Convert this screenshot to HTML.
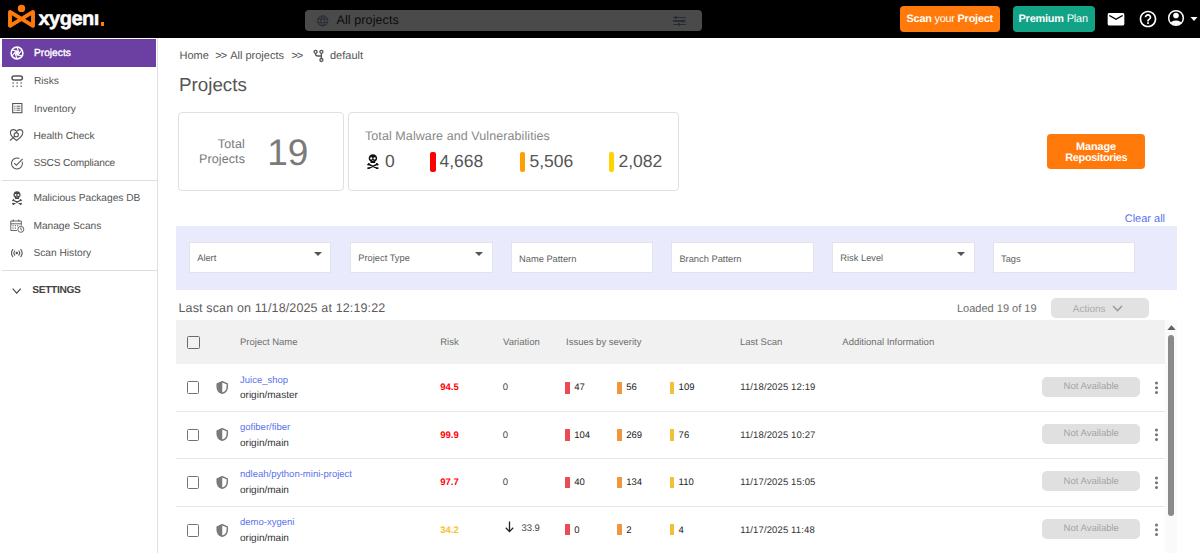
<!DOCTYPE html>
<html>
<head>
<meta charset="utf-8">
<title>Xygeni - Projects</title>
<style>
*{box-sizing:border-box;margin:0;padding:0}
html,body{width:1200px;height:553px;overflow:hidden;background:#fff;font-family:"Liberation Sans",sans-serif;color:#555;text-rendering:geometricPrecision}
.abs{position:absolute}
.t{position:absolute;white-space:nowrap;line-height:1;transform-origin:0 0}
#hdr{position:absolute;left:0;top:0;width:1200px;height:38px;background:#000}
#side{position:absolute;left:0;top:38px;width:158px;height:515px;background:#fff;border-right:1px solid #e0e0e0}
.mi{position:absolute;left:2px;width:154.400px;height:27.600px}
.mi.sel{background:#6c3fa3}
.mi .lbl{position:absolute;left:32px;top:9.400px;font-size:10.2px;color:#555;line-height:1;white-space:nowrap}
.mi.sel .lbl{color:#fff;-webkit-text-stroke:0.35px #fff}
.card{position:absolute;border:1px solid #e0e0e0;border-radius:4px;background:#fff}
.btn{position:absolute;border-radius:4px;color:#fff;text-align:center}
#band{position:absolute;left:175.600px;top:226px;width:1001.200px;height:64px;background:#e9eafc}
.inp{position:absolute;top:242.300px;width:142.300px;height:31px;background:#fff;border:1px solid #e3e3ea}
.inp span{position:absolute;left:7px;top:10px;font-size:9.300px;color:#606060;line-height:1;white-space:nowrap}
.caret{position:absolute;width:0;height:0;border-left:4px solid transparent;border-right:4px solid transparent;border-top:4px solid #555}
#thead{position:absolute;left:175.600px;top:320px;width:989.400px;height:44px;background:#f1f1f1}
.th{position:absolute;top:338.100px;font-size:9.500px;color:#6e6e6e;line-height:1;white-space:nowrap}
.row{position:absolute;left:176px;width:989px;height:47px;border-bottom:1px solid #e4e4e4}
.cb{position:absolute;width:12.400px;height:12.600px;border:1.600px solid #737373;border-radius:1.500px;background:#fff}
.na{position:absolute;left:1042px;width:98px;height:20px;border-radius:5px;background:#e0e0e0;color:#aaa;font-size:10px;text-align:center;line-height:19px}
.sev{position:absolute;width:4px;height:12px;border-radius:0.500px}
.c{position:absolute;font-size:9.500px;color:#222;line-height:1;white-space:nowrap}
</style>
</head>
<body>
<div id="hdr">
<svg class="abs" style="left:0;top:0" width="110" height="38" viewBox="0 0 110 38">
<g fill="none" stroke="#ff7a0a" stroke-width="3.900" stroke-linejoin="round" stroke-linecap="round">
<path d="M10 11.900L33 25.800L33 11.900L10 25.800Z"/>
</g>
<circle cx="21.5" cy="8.4" r="5.3" fill="#000"/>
<circle cx="21.5" cy="8.4" r="3.7" fill="#ff7a0a"/>
</svg>
<div class="t" id="logotxt" style="left:38.500px;top:9px;font-size:20px;font-weight:bold;color:#fff;letter-spacing:-0.500px;-webkit-text-stroke:0.5px #fff">xygen&#305;</div>
<div class="abs" style="left:101px;top:22px;width:3px;height:3.5px;background:#ff7a0a"></div>
<div class="abs" style="left:305px;top:10px;width:397px;height:21px;border-radius:4px;background:#4a4a4a"></div>
<svg class="abs" style="left:316.400px;top:14.200px" width="13.500" height="13.500" viewBox="0 0 24 24"><path fill="#2b2f36" d="M11.99 2C6.47 2 2 6.48 2 12s4.47 10 9.99 10C17.52 22 22 17.52 22 12S17.52 2 11.99 2zm6.93 6h-2.95c-.32-1.25-.78-2.45-1.38-3.56 1.84.63 3.37 1.91 4.33 3.56zM12 4.04c.83 1.2 1.48 2.53 1.91 3.96h-3.82c.43-1.43 1.08-2.76 1.91-3.96zM4.26 14C4.1 13.36 4 12.69 4 12s.1-1.36.26-2h3.38c-.08.66-.14 1.32-.14 2 0 .68.06 1.34.14 2H4.26zm.82 2h2.95c.32 1.25.78 2.45 1.38 3.56-1.84-.63-3.37-1.9-4.33-3.56zm2.95-8H5.08c.96-1.66 2.49-2.93 4.33-3.56C8.81 5.55 8.35 6.75 8.03 8zM12 19.96c-.83-1.2-1.48-2.53-1.91-3.96h3.82c-.43 1.43-1.08 2.76-1.91 3.96zM14.34 14H9.66c-.09-.66-.16-1.32-.16-2 0-.68.07-1.35.16-2h4.68c.09.65.16 1.32.16 2 0 .68-.07 1.34-.16 2zm.25 5.56c.6-1.11 1.06-2.31 1.38-3.56h2.95c-.96 1.65-2.49 2.93-4.33 3.56zM16.360 14c.08-.66.14-1.32.14-2 0-.68-.06-1.34-.14-2h3.38c.16.64.26 1.31.26 2s-.1 1.36-.26 2h-3.38z"/></svg>
<div class="t" id="allproj" style="left:336.500px;top:14.400px;font-size:12.500px;color:#0c0c0c;letter-spacing:0.100px">All projects</div>
<svg class="abs" style="left:672px;top:14px" width="15" height="14" viewBox="0 0 15 14"><g stroke="#262b31" stroke-width="1.2" fill="none"><path d="M1 3.5H14M1 7H14M1 10.5H14"/></g><g fill="#262b31"><rect x="3" y="2.3" width="2" height="2.4"/><rect x="10" y="5.6" width="2.4" height="2.8"/><rect x="6" y="9.3" width="2" height="2.4"/><rect x="1" y="6.2" width="10" height="1.6"/></g></svg>
<div class="btn" style="left:900px;top:6px;width:100px;height:26px;background:#ff7a0a"><div class="t" id="scanbtn" style="left:6.500px;top:8.100px;font-size:10.900px;color:#fff;letter-spacing:-0.220px"><b>Scan</b> your <b>Project</b></div></div>
<div class="btn" style="left:1012.500px;top:6px;width:82px;height:26px;background:#12a386"><div class="t" id="prembtn" style="left:6px;top:8.100px;font-size:10.900px;color:#fff;letter-spacing:-0.180px"><b>Premium</b> Plan</div></div>
<svg class="abs" style="left:1106.400px;top:9.600px" width="20" height="18.600" viewBox="0 0 24 24" preserveAspectRatio="none"><path fill="#fff" d="M20 4H4c-1.100 0-1.990.9-1.990 2L2 18c0 1.100.9 2 2 2h16c1.100 0 2-.9 2-2V6c0-1.100-.9-2-2-2zm0 4l-8 5-8-5V6l8 5 8-5v2z"/></svg>
<svg class="abs" style="left:1137.5px;top:8.8px" width="20" height="20" viewBox="0 0 24 24"><path fill="#fff" d="M11 18h2v-2h-2v2zm1-16C6.480 2 2 6.480 2 12s4.480 10 10 10 10-4.480 10-10S17.520 2 12 2zm0 18c-4.410 0-8-3.590-8-8s3.590-8 8-8 8 3.590 8 8-3.590 8-8 8zm0-14c-2.210 0-4 1.790-4 4h2c0-1.100.9-2 2-2s2 .9 2 2c0 2-3 1.750-3 5h2c0-2.250 3-2.500 3-5 0-2.210-1.790-4-4-4z"/></svg>
<svg class="abs" style="left:1166.200px;top:8.200px" width="20" height="20" viewBox="0 0 24 24"><defs><clipPath id="acc"><circle cx="12" cy="12" r="8.6"/></clipPath></defs><circle cx="12" cy="12" r="8.8" fill="none" stroke="#fff" stroke-width="1.8"/><circle cx="12" cy="9" r="3.4" fill="#fff"/><ellipse cx="12" cy="20.5" rx="7.5" ry="5.5" fill="#fff" clip-path="url(#acc)"/></svg>
<svg class="abs" style="left:1190px;top:17px" width="8" height="4" viewBox="0 0 8 4"><path d="M0.500 0H7.500L4 4Z" fill="#fff"/></svg>
</div>
<div id="side">
<div class="mi sel" style="top:1px"><span class="lbl" id="m1" style="left:32px;top:10.400px">Projects</span>
<svg class="abs" style="left:7.800px;top:6.600px" width="14" height="14" viewBox="0 0 14 14"><circle cx="7" cy="7" r="5.900" fill="none" stroke="#fff" stroke-width="1.600"/><g stroke="#fff" stroke-width="1.100" fill="none"><path d="M7.00 1.40L9.32 7.62M11.85 4.20L7.62 9.32M11.85 9.80L5.30 8.70M7.00 12.60L4.68 6.38M2.15 9.80L6.38 4.68M2.15 4.20L8.70 5.30"/></g><circle cx="7" cy="7" r="1.700" fill="#fff"/></svg></div>
<div class="mi" style="top:28.6px"><span class="lbl" id="m2" style="left:32px;top:10.400px">Risks</span>
<svg class="abs" style="left:9px;top:8px" width="13" height="13" viewBox="0 0 13 13"><rect x="1" y="0.900" width="10.400" height="4" rx="2" fill="none" stroke="#555" stroke-width="1.500"/><g fill="#555"><rect x="1.500" y="7.300" width="1.300" height="1.300"/><rect x="5.500" y="7.300" width="1.300" height="1.300"/><rect x="9.500" y="7.300" width="1.300" height="1.300"/><rect x="1.500" y="10.600" width="1.300" height="1.300"/><rect x="5.500" y="10.600" width="1.300" height="1.300"/><rect x="9.500" y="10.600" width="1.300" height="1.300"/></g></svg></div>
<div class="mi" style="top:56.200px"><span class="lbl" id="m3" style="left:32px;top:10.400px">Inventory</span>
<svg class="abs" style="left:9.500px;top:8.800px" width="11" height="11" viewBox="0 0 11 11"><rect x="0.700" y="0.500" width="9.200" height="9.200" fill="none" stroke="#555" stroke-width="1.100"/><g stroke="#555" stroke-width="0.900"><path d="M2.300 3.200H3.500M4.500 3.200H8.300M2.300 5.200H3.500M4.500 5.200H8.300M2.300 7.200H3.500M4.500 7.200H8.300"/></g></svg></div>
<div class="mi" style="top:83.800px"><span class="lbl" id="m4" style="left:31.400px;top:10.400px">Health Check</span>
<svg class="abs" style="left:7.300px;top:7.600px" width="15" height="13" viewBox="0 0 15 13"><path d="M7.600 2.400C8.400 1 9.700 0.600 10.800 0.600C12.600 0.600 13.800 1.900 13.800 3.600C13.800 6.600 10.300 9.700 7.600 11.500C4.900 9.700 1.400 6.600 1.400 3.600C1.400 1.900 2.600 0.600 4.400 0.600C5.500 0.600 6.800 1 7.600 2.400Z" fill="none" stroke="#555" stroke-width="1.050"/><circle cx="7.300" cy="5.700" r="2.100" fill="none" stroke="#555" stroke-width="1.050"/><path d="M5.800 7.200L0.900 11.600" stroke="#555" stroke-width="1.150" fill="none"/></svg></div>
<div class="mi" style="top:111.400px"><span class="lbl" id="m5" style="left:31.400px;letter-spacing:-0.180px">SSCS Compliance</span>
<svg class="abs" style="left:8px;top:7px" width="14" height="14" viewBox="0 0 14 14"><path d="M12.200 5.700A5.500 5.500 0 1 1 9.400 2.500" fill="none" stroke="#555" stroke-width="1.050"/><path d="M4.200 7.100L6.400 9.300L12.600 2.800" fill="none" stroke="#555" stroke-width="1.150"/></svg></div>
<div class="abs" style="left:2px;top:142px;width:155px;height:1px;background:#ddd"></div>
<div class="mi" style="top:146px"><span class="lbl" id="m6" style="left:31.400px;top:10.400px">Malicious Packages DB</span>
<svg class="abs" style="left:10px;top:6.800px" width="10" height="13.800" viewBox="0 0 12 15.500" preserveAspectRatio="none"><path d="M6 0.200C3.400 0.200 1.700 2 1.700 4.300C1.700 5.800 2.400 6.900 3.600 7.500V9.100H8.400V7.500C9.600 6.900 10.300 5.800 10.300 4.300C10.300 2 8.600 0.200 6 0.200Z" fill="#4a4a4a"/><circle cx="4.300" cy="4.500" r="1.150" fill="#fff"/><circle cx="7.700" cy="4.500" r="1.150" fill="#fff"/><path d="M6 5.700L5.300 7H6.700Z" fill="#fff"/><path d="M1.500 10.400L10.500 14.500M10.500 10.400L1.500 14.500" stroke="#4a4a4a" stroke-width="1.500" stroke-linecap="round"/><g fill="#4a4a4a"><circle cx="1.100" cy="10.700" r="0.900"/><circle cx="1.900" cy="10" r="0.900"/><circle cx="10.900" cy="10.700" r="0.900"/><circle cx="10.100" cy="10" r="0.900"/><circle cx="1.100" cy="14.200" r="0.900"/><circle cx="1.900" cy="14.900" r="0.900"/><circle cx="10.900" cy="14.200" r="0.900"/><circle cx="10.100" cy="14.900" r="0.900"/></g></svg></div>
<div class="mi" style="top:173.600px"><span class="lbl" id="m7" style="left:31.400px;top:10.400px">Manage Scans</span>
<svg class="abs" style="left:7.500px;top:7px" width="15" height="14" viewBox="0 0 15 14"><g fill="none" stroke="#555" stroke-width="0.900"><path d="M7 11.500H0.800V2H11.300V6.500M0.800 4.800H11.300M3.300 0.500V2.800M8.800 0.500V2.800"/><circle cx="10.800" cy="10.300" r="3"/><path d="M10.800 8.600V10.400L12 11.200"/></g><g fill="#555"><rect x="2.500" y="6.200" width="1.100" height="1.100"/><rect x="4.800" y="6.200" width="1.100" height="1.100"/><rect x="7.100" y="6.200" width="1.100" height="1.100"/><rect x="2.500" y="8.600" width="1.100" height="1.100"/><rect x="4.800" y="8.600" width="1.100" height="1.100"/></g></svg></div>
<div class="mi" style="top:201.800px"><span class="lbl" id="m8" style="left:31.400px">Scan History</span>
<svg class="abs" style="left:9.200px;top:9.600px" width="11.600" height="8.200" viewBox="0 0 13 9" preserveAspectRatio="none"><g fill="none" stroke="#555" stroke-width="1.250" stroke-linecap="round"><path d="M2 0.600C0.300 2.800 0.300 6.200 2 8.400M11 0.600C12.700 2.800 12.700 6.200 11 8.400M4.200 2.200C3.100 3.500 3.100 5.500 4.200 6.800M8.800 2.200C9.900 3.500 9.900 5.500 8.800 6.800"/></g><circle cx="6.500" cy="4.500" r="1.350" fill="#555"/></svg></div>
<div class="abs" style="left:2px;top:232px;width:155px;height:1px;background:#ddd"></div>
<svg class="abs" style="left:11.800px;top:250.200px" width="9.400" height="6.200" viewBox="0 0 11 7" preserveAspectRatio="none"><path d="M0.800 0.800L5.500 5.800L10.200 0.800" fill="none" stroke="#444" stroke-width="1.300"/></svg>
<div class="t" id="m9" style="left:32.300px;top:247.500px;font-size:10.200px;font-weight:bold;color:#444;letter-spacing:-0.350px">SETTINGS</div>
</div>
<div id="main">
<div class="t" id="b1" style="left:179.5px;top:51.400px;font-size:11px;color:#555">Home</div>
<div class="t" id="b2" style="left:215.3px;top:51.400px;font-size:11px;color:#555;letter-spacing:-1px">&gt;&gt;</div>
<div class="t" id="b3" style="left:230.2px;top:51.400px;font-size:11px;color:#555">All projects</div>
<div class="t" id="b4" style="left:291.4px;top:51.400px;font-size:11px;color:#555;letter-spacing:-1px">&gt;&gt;</div>
<svg class="abs" style="left:313px;top:49px" width="12" height="14" viewBox="0 0 12 14"><g fill="none" stroke="#555" stroke-width="1.300"><circle cx="2.6" cy="2.8" r="1.5"/><circle cx="8.400" cy="2.800" r="1.500"/><circle cx="8.400" cy="11" r="1.500"/><path d="M8.400 4.300V9.500M2.600 4.300V5.200C2.600 6.600 3.600 7 5 7H8.400"/></g></svg>
<div class="t" id="b5" style="left:330px;top:51.400px;font-size:11px;color:#555">default</div>
<div class="t" id="title" style="left:179px;top:75.900px;font-size:18.800px;color:#555">Projects</div>
<div class="card" style="left:178px;top:111.500px;width:166px;height:79.500px"></div>
<div class="t" id="c1a" style="right:955px;top:138.200px;font-size:12.500px;color:#777;letter-spacing:0.150px">Total</div>
<div class="t" id="c1b" style="right:955px;top:152.900px;font-size:12.500px;color:#777;letter-spacing:0.100px">Projects</div>
<div class="t" id="c1n" style="left:267.200px;top:133.700px;font-size:37px;color:#7a7a7a;letter-spacing:0px">19</div>
<div class="card" style="left:348px;top:111.500px;width:331px;height:79.500px"></div>
<div class="t" id="c2t" style="left:365px;top:130.300px;font-size:12.500px;color:#888;letter-spacing:0.080px">Total Malware and Vulnerabilities</div>
<svg class="abs" style="left:366.800px;top:154px" width="11.800" height="15.300" viewBox="0 0 12 15.500" preserveAspectRatio="none"><path d="M6 0.200C3.400 0.200 1.700 2 1.700 4.300C1.700 5.800 2.400 6.900 3.600 7.500V9.100H8.400V7.500C9.600 6.900 10.300 5.800 10.300 4.300C10.300 2 8.600 0.200 6 0.200Z" fill="#111"/><circle cx="4.300" cy="4.500" r="1.150" fill="#fff"/><circle cx="7.700" cy="4.500" r="1.150" fill="#fff"/><path d="M6 5.700L5.300 7H6.700Z" fill="#fff"/><path d="M1.500 10.400L10.500 14.500M10.500 10.400L1.500 14.500" stroke="#111" stroke-width="1.500" stroke-linecap="round"/><g fill="#111"><circle cx="1.100" cy="10.700" r="0.900"/><circle cx="1.900" cy="10" r="0.900"/><circle cx="10.900" cy="10.700" r="0.900"/><circle cx="10.100" cy="10" r="0.900"/><circle cx="1.100" cy="14.200" r="0.900"/><circle cx="1.900" cy="14.900" r="0.900"/><circle cx="10.900" cy="14.200" r="0.900"/><circle cx="10.100" cy="14.900" r="0.900"/></g></svg>
<div class="t" id="n0" style="left:385px;top:152.500px;font-size:17.500px;color:#555">0</div>
<div class="abs" style="left:430.300px;top:151.700px;width:5.500px;height:20px;border-radius:2px;background:#f00"></div>
<div class="t" id="n1" style="left:439.500px;top:152.500px;font-size:17.500px;color:#555">4,668</div>
<div class="abs" style="left:519.700px;top:151.700px;width:5.500px;height:20px;border-radius:2px;background:#ffa000"></div>
<div class="t" id="n2" style="left:529.500px;top:152.500px;font-size:17.500px;color:#555">5,506</div>
<div class="abs" style="left:608.900px;top:151.700px;width:5.500px;height:20px;border-radius:2px;background:#ffd200"></div>
<div class="t" id="n3" style="left:618.500px;top:152.500px;font-size:17.500px;color:#555">2,082</div>
<div class="btn" style="left:1047px;top:134px;width:98px;height:35px;background:#ff7a0a"></div>
<div class="t" id="mr1" style="left:1076px;top:141.600px;font-size:10.900px;font-weight:bold;color:#fff;letter-spacing:-0.080px">Manage</div>
<div class="t" id="mr2" style="left:1065.300px;top:153.100px;font-size:10.900px;font-weight:bold;color:#fff;letter-spacing:-0.330px">Repositories</div>
<div class="t" id="clr" style="left:1124.700px;top:213.800px;font-size:11px;color:#5b72ee">Clear all</div>
<div id="band"></div>
<div class="inp" style="left:189.200px"><span id="f0" style="top:10.700px">Alert</span><div class="caret" style="left:124px;top:9px"></div></div>
<div class="inp" style="left:350.300px"><span id="f1" style="top:10.700px">Project Type</span><div class="caret" style="left:124px;top:9px"></div></div>
<div class="inp" style="left:511px"><span id="f2" style="top:11.700px">Name Pattern</span></div>
<div class="inp" style="left:671.400px"><span id="f3" style="top:11.700px">Branch Pattern</span></div>
<div class="inp" style="left:832.300px"><span id="f4" style="top:10.700px">Risk Level</span><div class="caret" style="left:124px;top:9px"></div></div>
<div class="inp" style="left:993px"><span id="f5" style="top:11.700px">Tags</span></div>
<div class="t" id="ls" style="left:178.500px;top:301.900px;font-size:12.500px;color:#5c5c5c;letter-spacing:0.140px">Last scan on 11/18/2025 at 12:19:22</div>
<div class="t" id="ld" style="left:957px;top:303.800px;font-size:11px;color:#6c6c6c">Loaded 19 of 19</div>
<div class="abs" style="left:1051px;top:298px;width:98px;height:20px;border-radius:5px;background:#e2e2e2"></div>
<div class="t" id="act" style="left:1072.800px;top:305px;font-size:10px;color:#aaa">Actions</div>
<svg class="abs" style="left:1112px;top:305px" width="11" height="7" viewBox="0 0 11 7"><path d="M1 1L5.500 5.500L10 1" fill="none" stroke="#9c9c9c" stroke-width="1.600"/></svg>
<div id="thead"></div>
<div class="cb" style="left:187.400px;top:336.200px;border-color:#6a6a6a;background:transparent"></div>
<div class="th" id="h0" style="left:240px">Project Name</div>
<div class="th" id="h1" style="left:440.2px">Risk</div>
<div class="th" id="h2" style="left:503px">Variation</div>
<div class="th" id="h3" style="left:566px">Issues by severity</div>
<div class="th" id="h4" style="left:740px">Last Scan</div>
<div class="th" id="h5" style="left:842.3px">Additional Information</div>
<div class="abs" style="left:1165px;top:320px;width:12px;height:233px;background:#fafafa"></div>
<svg class="abs" style="left:1167px;top:324.500px" width="9" height="5" viewBox="0 0 9 5"><path d="M0.300 5L4.500 0.200L8.700 5Z" fill="#606060"/></svg>
<div class="abs" style="left:1168.200px;top:334.500px;width:6px;height:181px;border-radius:3px;background:#8a8a8a"></div>
<div class="abs" style="left:176px;top:411.0px;width:989px;height:1px;background:#e7e7e7"></div>
<div class="cb" style="left:187px;top:381.4px"></div>
<svg class="abs" style="left:216px;top:380.9px" width="12.500" height="13" viewBox="0 0 12.500 13"><path d="M6.250 0.800L11.300 2.900V6C11.300 8.900 9.200 11.400 6.250 12.300C3.300 11.400 1.200 8.900 1.200 6V2.900Z" fill="none" stroke="#7a7a7a" stroke-width="1.500" stroke-linejoin="round"/><path d="M6.250 0.800L1.200 2.900V6C1.200 8.900 3.300 11.400 6.250 12.300Z" fill="#7a7a7a"/></svg>
<div class="c" id="r0n" style="left:240px;top:375.8px;color:#5b72ee">Juice_shop</div>
<div class="c" id="r0b" style="left:240px;top:391.4px;color:#333;font-size:10px">origin/master</div>
<div class="c" id="r0k" style="left:440.200px;top:383.0px;color:#f00;font-weight:bold">94.5</div>
<div class="c" id="r0v" style="left:502.800px;top:383.0px;color:#444">0</div>
<div class="sev" style="left:565.2px;top:382.0px;background:#ea4a50;width:4.600px;height:11.500px"></div>
<div class="c" id="r0x" style="left:574.2px;top:383.0px;color:#222">47</div>
<div class="sev" style="left:617.2px;top:382.0px;background:#f0963c;width:4.600px;height:11.500px"></div>
<div class="c" id="r0y" style="left:626.2px;top:383.0px;color:#222">56</div>
<div class="sev" style="left:669.6px;top:382.0px;background:#f2c037;width:4.600px;height:11.500px"></div>
<div class="c" id="r0z" style="left:678.6px;top:383.0px;color:#222">109</div>
<div class="c" id="r0d" style="left:740.200px;top:383.0px;color:#333;letter-spacing:0.130px">11/18/2025 12:19</div>
<div class="na" style="top:376.6px"></div>
<div class="c" id="r0a" style="left:1063.600px;top:382.1px;color:#a4a4a4">Not Available</div>
<svg class="abs" style="left:1153.500px;top:380.9px" width="5" height="14" viewBox="0 0 5 14"><g fill="#737373"><circle cx="2.500" cy="2" r="1.500"/><circle cx="2.500" cy="6.800" r="1.500"/><circle cx="2.500" cy="11.600" r="1.500"/></g></svg>
<div class="abs" style="left:176px;top:458.3px;width:989px;height:1px;background:#e7e7e7"></div>
<div class="cb" style="left:187px;top:428.7px"></div>
<svg class="abs" style="left:216px;top:428.2px" width="12.500" height="13" viewBox="0 0 12.500 13"><path d="M6.250 0.800L11.300 2.900V6C11.300 8.900 9.200 11.400 6.250 12.300C3.300 11.400 1.200 8.900 1.200 6V2.900Z" fill="none" stroke="#7a7a7a" stroke-width="1.500" stroke-linejoin="round"/><path d="M6.250 0.800L1.200 2.900V6C1.200 8.900 3.300 11.400 6.250 12.300Z" fill="#7a7a7a"/></svg>
<div class="c" id="r1n" style="left:240px;top:423.1px;color:#5b72ee">gofiber/fiber</div>
<div class="c" id="r1b" style="left:240px;top:438.7px;color:#333;font-size:10px">origin/main</div>
<div class="c" id="r1k" style="left:440.200px;top:430.9px;color:#f00;font-weight:bold">99.9</div>
<div class="c" id="r1v" style="left:502.800px;top:430.9px;color:#444">0</div>
<div class="sev" style="left:565.2px;top:429.3px;background:#ea4a50;width:4.600px;height:11.500px"></div>
<div class="c" id="r1x" style="left:574.2px;top:430.9px;color:#222">104</div>
<div class="sev" style="left:617.2px;top:429.3px;background:#f0963c;width:4.600px;height:11.500px"></div>
<div class="c" id="r1y" style="left:626.2px;top:430.9px;color:#222">269</div>
<div class="sev" style="left:669.6px;top:429.3px;background:#f2c037;width:4.600px;height:11.500px"></div>
<div class="c" id="r1z" style="left:678.6px;top:430.9px;color:#222">76</div>
<div class="c" id="r1d" style="left:740.200px;top:430.9px;color:#333;letter-spacing:0.130px">11/18/2025 10:27</div>
<div class="na" style="top:423.9px"></div>
<div class="c" id="r1a" style="left:1063.600px;top:429.4px;color:#a4a4a4">Not Available</div>
<svg class="abs" style="left:1153.500px;top:428.2px" width="5" height="14" viewBox="0 0 5 14"><g fill="#737373"><circle cx="2.500" cy="2" r="1.500"/><circle cx="2.500" cy="6.800" r="1.500"/><circle cx="2.500" cy="11.600" r="1.500"/></g></svg>
<div class="abs" style="left:176px;top:505.6px;width:989px;height:1px;background:#e7e7e7"></div>
<div class="cb" style="left:187px;top:476.0px"></div>
<svg class="abs" style="left:216px;top:475.5px" width="12.500" height="13" viewBox="0 0 12.500 13"><path d="M6.250 0.800L11.300 2.900V6C11.300 8.900 9.200 11.400 6.250 12.300C3.300 11.400 1.200 8.900 1.200 6V2.900Z" fill="none" stroke="#7a7a7a" stroke-width="1.500" stroke-linejoin="round"/><path d="M6.250 0.800L1.200 2.900V6C1.200 8.900 3.300 11.400 6.250 12.300Z" fill="#7a7a7a"/></svg>
<div class="c" id="r2n" style="left:240px;top:470.4px;color:#5b72ee">ndleah/python-mini-project</div>
<div class="c" id="r2b" style="left:240px;top:486.0px;color:#333;font-size:10px">origin/main</div>
<div class="c" id="r2k" style="left:440.200px;top:478.2px;color:#f00;font-weight:bold">97.7</div>
<div class="c" id="r2v" style="left:502.800px;top:478.2px;color:#444">0</div>
<div class="sev" style="left:565.2px;top:476.6px;background:#ea4a50;width:4.600px;height:11.500px"></div>
<div class="c" id="r2x" style="left:574.2px;top:478.2px;color:#222">40</div>
<div class="sev" style="left:617.2px;top:476.6px;background:#f0963c;width:4.600px;height:11.500px"></div>
<div class="c" id="r2y" style="left:626.2px;top:478.2px;color:#222">134</div>
<div class="sev" style="left:669.6px;top:476.6px;background:#f2c037;width:4.600px;height:11.500px"></div>
<div class="c" id="r2z" style="left:678.6px;top:478.2px;color:#222">110</div>
<div class="c" id="r2d" style="left:740.200px;top:478.2px;color:#333;letter-spacing:0.130px">11/17/2025 15:05</div>
<div class="na" style="top:471.2px"></div>
<div class="c" id="r2a" style="left:1063.600px;top:476.7px;color:#a4a4a4">Not Available</div>
<svg class="abs" style="left:1153.500px;top:475.5px" width="5" height="14" viewBox="0 0 5 14"><g fill="#737373"><circle cx="2.500" cy="2" r="1.500"/><circle cx="2.500" cy="6.800" r="1.500"/><circle cx="2.500" cy="11.600" r="1.500"/></g></svg>
<div class="cb" style="left:187px;top:524px"></div>
<svg class="abs" style="left:216px;top:523.500px" width="12.500" height="13" viewBox="0 0 12.500 13"><path d="M6.250 0.800L11.300 2.900V6C11.300 8.900 9.200 11.400 6.250 12.300C3.300 11.400 1.200 8.900 1.200 6V2.900Z" fill="none" stroke="#7a7a7a" stroke-width="1.500" stroke-linejoin="round"/><path d="M6.250 0.800L1.200 2.900V6C1.200 8.900 3.300 11.400 6.250 12.300Z" fill="#7a7a7a"/></svg>
<div class="c" id="r3n" style="left:240px;top:517.7px;color:#5b72ee">demo-xygeni</div>
<div class="c" id="r3b" style="left:240px;top:534px;color:#333;font-size:10px">origin/main</div>
<div class="c" id="r3k" style="left:440.200px;top:525.5px;color:#fbc02d;font-weight:bold">34.2</div>
<svg class="abs" style="left:504px;top:521.4px" width="11" height="12" viewBox="0 0 11 12"><path d="M5.500 0.500V10.500M1.800 6.800L5.500 10.600L9.200 6.800" fill="none" stroke="#222" stroke-width="1.300"/></svg>
<div class="c" id="r3v" style="left:521.400px;top:524.0px;color:#444">33.9</div>
<div class="sev" style="left:565.2px;top:523.9px;background:#ea4a50;width:4.600px;height:11.500px"></div>
<div class="c" id="r3x" style="left:574.2px;top:525.5px;color:#222">0</div>
<div class="sev" style="left:617.2px;top:523.9px;background:#f0963c;width:4.600px;height:11.500px"></div>
<div class="c" id="r3y" style="left:626.2px;top:525.5px;color:#222">2</div>
<div class="sev" style="left:669.6px;top:523.9px;background:#f2c037;width:4.600px;height:11.500px"></div>
<div class="c" id="r3z" style="left:678.6px;top:525.5px;color:#222">4</div>
<div class="c" id="r3d" style="left:740.200px;top:525.5px;color:#333;letter-spacing:0.130px">11/17/2025 11:48</div>
<div class="na" style="top:518.5px"></div>
<div class="c" id="r3a" style="left:1063.600px;top:524.0px;color:#a4a4a4">Not Available</div>
<svg class="abs" style="left:1153.500px;top:522.8px" width="5" height="14" viewBox="0 0 5 14"><g fill="#737373"><circle cx="2.500" cy="2" r="1.500"/><circle cx="2.500" cy="6.800" r="1.500"/><circle cx="2.500" cy="11.600" r="1.500"/></g></svg>
</div>
</body>
</html>
